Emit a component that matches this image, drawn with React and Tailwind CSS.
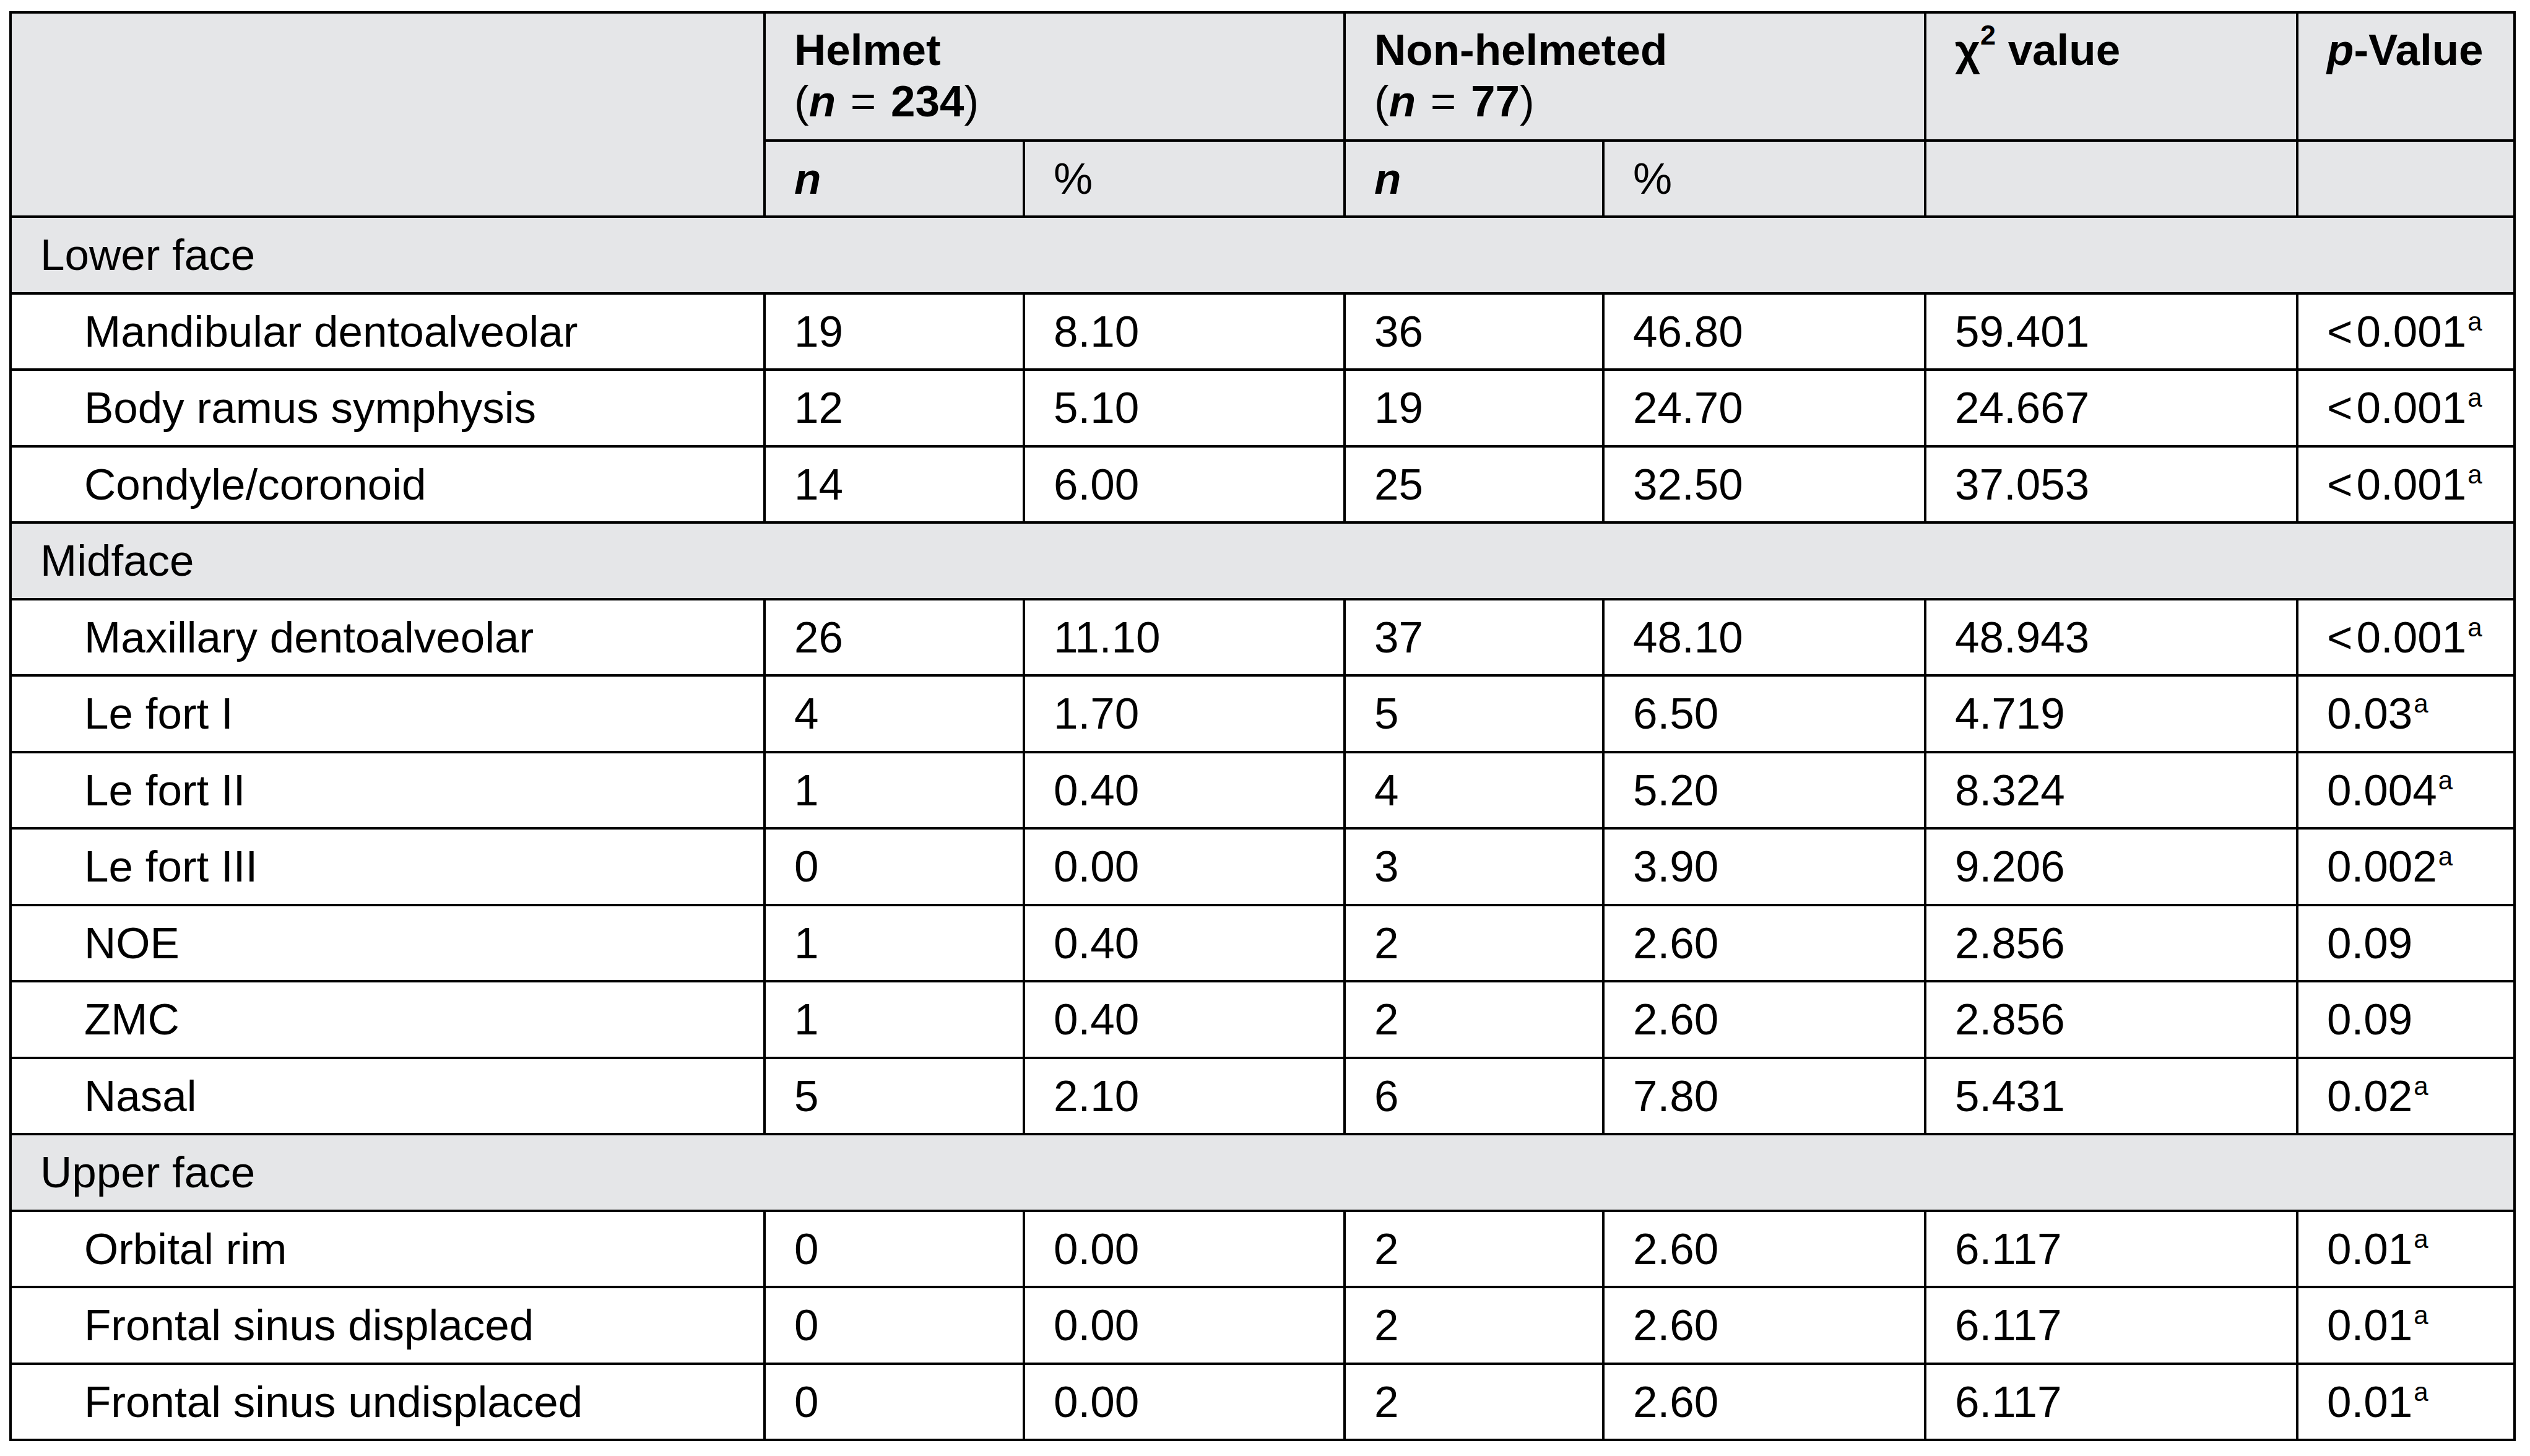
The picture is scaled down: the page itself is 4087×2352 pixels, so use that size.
import React from "react";

const groups = [
  {
    title: "Lower face",
    rows: [
      ["Mandibular dentoalveolar", "19", "8.10", "36", "46.80", "59.401", "<0.001", true],
      ["Body ramus symphysis", "12", "5.10", "19", "24.70", "24.667", "<0.001", true],
      ["Condyle/coronoid", "14", "6.00", "25", "32.50", "37.053", "<0.001", true],
    ],
  },
  {
    title: "Midface",
    rows: [
      ["Maxillary dentoalveolar", "26", "11.10", "37", "48.10", "48.943", "<0.001", true],
      ["Le fort I", "4", "1.70", "5", "6.50", "4.719", "0.03", true],
      ["Le fort II", "1", "0.40", "4", "5.20", "8.324", "0.004", true],
      ["Le fort III", "0", "0.00", "3", "3.90", "9.206", "0.002", true],
      ["NOE", "1", "0.40", "2", "2.60", "2.856", "0.09", false],
      ["ZMC", "1", "0.40", "2", "2.60", "2.856", "0.09", false],
      ["Nasal", "5", "2.10", "6", "7.80", "5.431", "0.02", true],
    ],
  },
  {
    title: "Upper face",
    rows: [
      ["Orbital rim", "0", "0.00", "2", "2.60", "6.117", "0.01", true],
      ["Frontal sinus displaced", "0", "0.00", "2", "2.60", "6.117", "0.01", true],
      ["Frontal sinus undisplaced", "0", "0.00", "2", "2.60", "6.117", "0.01", true],
    ],
  },
];

function Cell({ children, className = "" }) {
  return (
    <div className={"flex items-center bg-white pl-[46px] whitespace-nowrap " + className}>
      {children}
    </div>
  );
}

function HeadTop({ children, className = "" }) {
  return (
    <div className={"bg-[#e5e6e8] pl-[46px] pt-[17px] leading-[83px] font-bold whitespace-nowrap " + className}>
      {children}
    </div>
  );
}

function HeadSub({ children, className = "" }) {
  return (
    <div className={"flex items-center bg-[#e5e6e8] pl-[46px] font-bold whitespace-nowrap " + className}>
      {children}
    </div>
  );
}

function PValue({ value, sig }) {
  const sup = sig ? (
    <sup className="text-[42px] leading-none top-[-26px] ml-[2px]">a</sup>
  ) : null;
  if (value.startsWith("<")) {
    return (
      <span>
        <span className="mr-[6px]">&lt;</span>
        {value.slice(1)}
        {sup}
      </span>
    );
  }
  return (
    <span>
      {value}
      {sup}
    </span>
  );
}

function Count({ n }) {
  return (
    <div>
      <span className="font-normal">(</span>
      <span className="italic">n</span>{" "}
      <span className="mx-[4px] font-normal">=</span> {n}
      <span className="font-normal">)</span>
    </div>
  );
}

export default function App() {
  return (
    <div className="min-h-screen bg-white pl-[15px] pt-[18px] font-['Liberation_Sans',Arial,sans-serif] text-[71px] leading-none text-black">
      <div className="grid w-fit gap-[4px] bg-black p-[4px] grid-cols-[1214px_415px_514px_414px_516px_597px_347px] grid-rows-[203px_119px_repeat(16,119.5px)]">
        <div className="row-span-2 bg-[#e5e6e8]" />
        <HeadTop className="col-span-2">
          <div>Helmet</div>
          <Count n="234" />
        </HeadTop>
        <HeadTop className="col-span-2">
          <div>Non-helmeted</div>
          <Count n="77" />
        </HeadTop>
        <HeadTop>
          <div>
            χ<sup className="text-[45px] leading-none top-[-33px]">2</sup> value
          </div>
        </HeadTop>
        <HeadTop>
          <div>
            <span className="italic">p</span>-Value
          </div>
        </HeadTop>

        <HeadSub>
          <span className="italic">n</span>
        </HeadSub>
        <HeadSub className="font-normal">%</HeadSub>
        <HeadSub>
          <span className="italic">n</span>
        </HeadSub>
        <HeadSub className="font-normal">%</HeadSub>
        <HeadSub />
        <HeadSub />

        {groups.map((g) => (
          <React.Fragment key={g.title}>
            <div className="col-span-7 flex items-center bg-[#e5e6e8] pl-[46px]">{g.title}</div>
            {g.rows.map((r) => (
              <React.Fragment key={r[0]}>
                <Cell className="pl-[117px]">{r[0]}</Cell>
                <Cell>{r[1]}</Cell>
                <Cell>{r[2]}</Cell>
                <Cell>{r[3]}</Cell>
                <Cell>{r[4]}</Cell>
                <Cell>{r[5]}</Cell>
                <Cell>
                  <PValue value={r[6]} sig={r[7]} />
                </Cell>
              </React.Fragment>
            ))}
          </React.Fragment>
        ))}
      </div>
    </div>
  );
}
